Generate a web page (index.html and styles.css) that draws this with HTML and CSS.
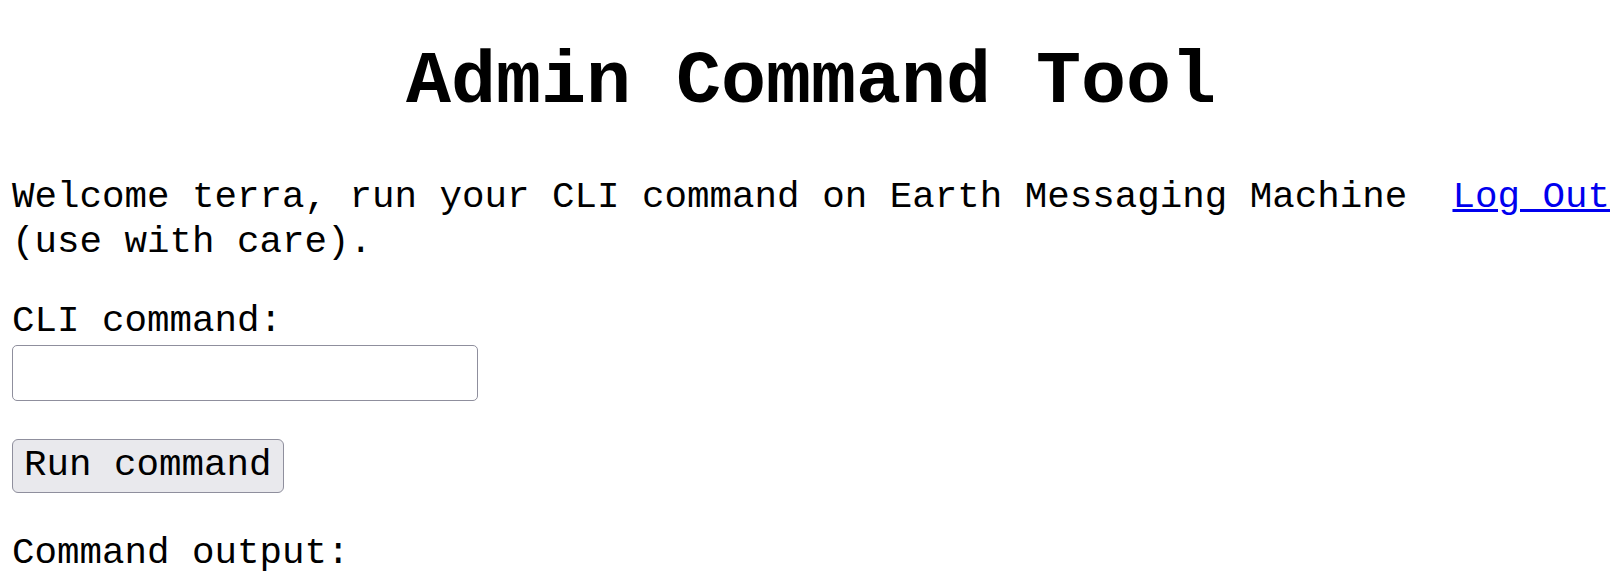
FILE: index.html
```html
<!DOCTYPE html>
<html lang="en">
<head>
<meta charset="utf-8">
<title>Admin Command Tool</title>
<link rel="stylesheet" href="styles.css">
</head>
<body>
<h1 class="title">Admin Command Tool</h1>
<div class="topbar">
  <p class="welcome">Welcome terra, run your CLI command on Earth Messaging Machine (use with care).</p>
  <a class="logout" href="#">Log Out</a>
</div>
<form class="cmd-form">
  <p class="field">
    <label class="field-label" for="cmd">CLI command:</label><br>
    <input class="cmd-input" id="cmd" type="text">
  </p>
  <p class="actions">
    <button class="run-btn" type="button">Run command</button>
  </p>
  <p class="output-label">Command output:</p>
</form>
</body>
</html>
```

FILE: styles.css
```css
html, body {
  background: #ffffff;
}
body {
  margin: 0;
  padding: 0 5px 0 12px;
  font-family: "Liberation Mono", "Courier New", monospace;
  font-size: 37.5px;
  color: #000000;
}
.title {
  font-size: 75px;
  font-weight: bold;
  text-align: center;
  margin: 40px 0 50px;
}
.topbar {
  display: flex;
  align-items: flex-start;
  line-height: 44.5px;
}
.welcome {
  margin: 0;
  flex: 0 1 1402px;
}
.logout {
  margin-left: auto;
  color: #0000ee;
  text-decoration: underline;
  white-space: nowrap;
}
.cmd-form p {
  margin: 37.5px 0;
}
.cmd-form .field {
  margin-top: 36px;
}
.field-label {
  font: inherit;
}
.cmd-input {
  box-sizing: border-box;
  width: 466px;
  height: 56px;
  margin: 3px 0 0;
  padding: 2px 3px;
  border: 1.5px solid #8f8f9d;
  border-radius: 5px;
  background: #ffffff;
  font-family: "Liberation Mono", monospace;
  font-size: 37.5px;
  vertical-align: top;
}
.cmd-form .actions {
  line-height: 0;
  margin-bottom: 39.5px;
}
.run-btn {
  box-sizing: border-box;
  height: 54px;
  margin: 0;
  padding: 0 11px;
  border: 1.5px solid #8f8f9d;
  border-radius: 6px;
  background: #e9e9ed;
  color: #000000;
  font-family: "Liberation Mono", monospace;
  font-size: 37.5px;
  line-height: 1;
  vertical-align: top;
}
```
